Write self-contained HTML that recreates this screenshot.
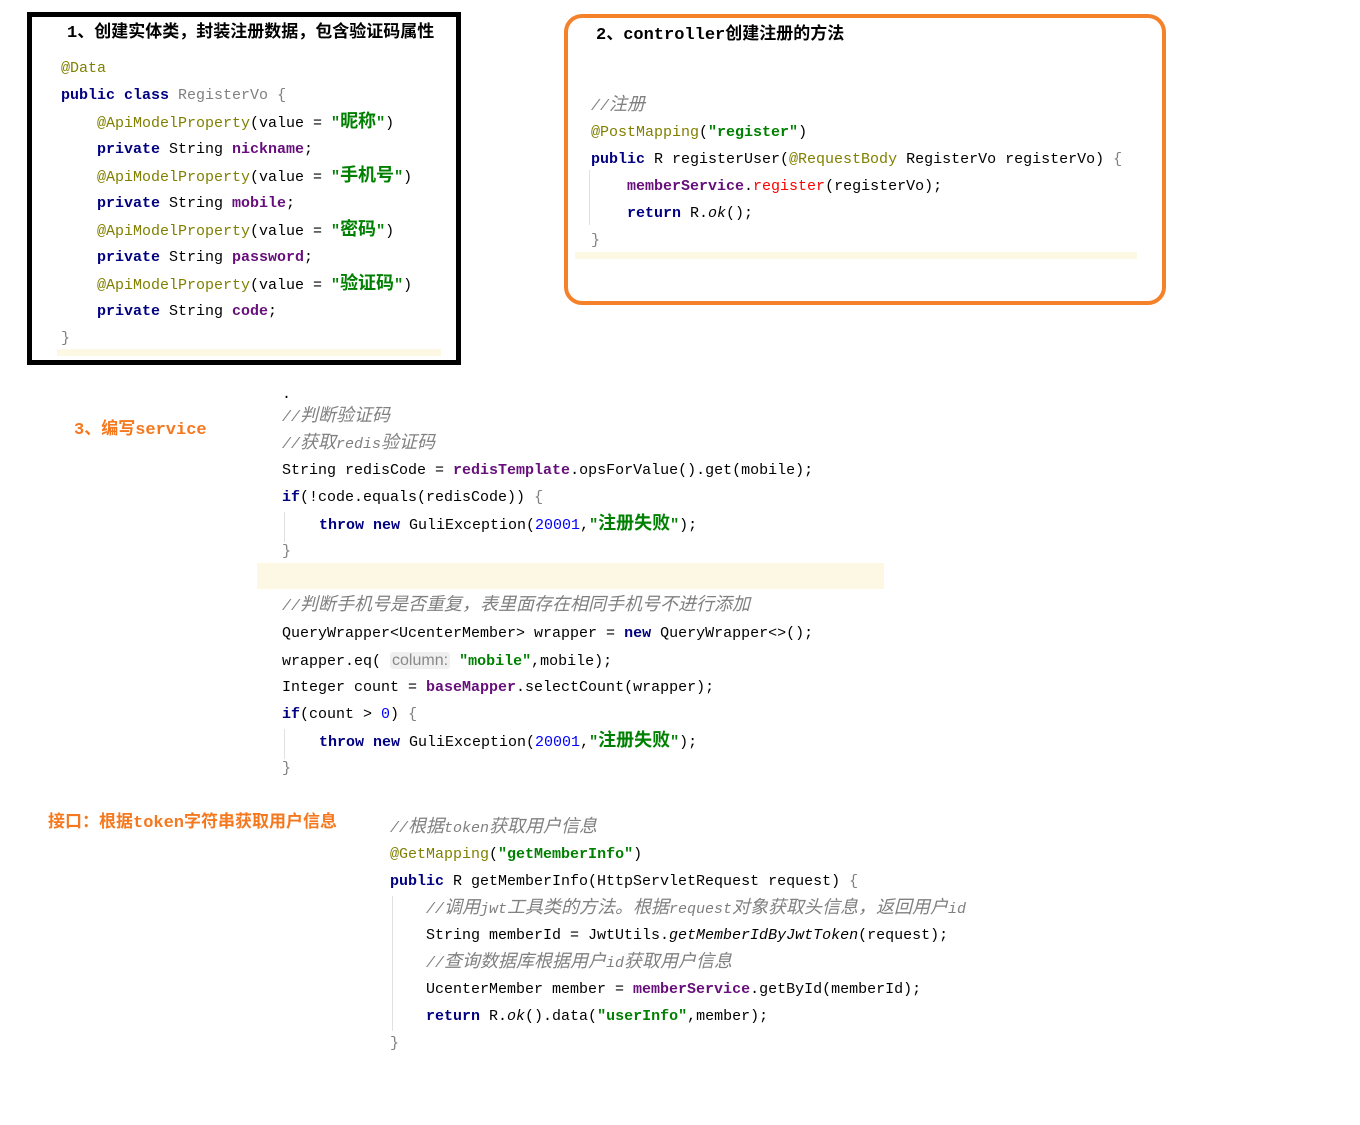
<!DOCTYPE html>
<html><head><meta charset="utf-8"><style>
html,body{margin:0;padding:0;background:#fff;width:1360px;height:1125px;overflow:hidden;position:relative}
.l{position:absolute;white-space:pre;font-family:"Liberation Mono","Noto Sans CJK SC",monospace;font-size:15px;line-height:20px;color:#000}
.k{color:#000080;font-weight:bold}
.a{color:#808000}
.s{color:#008000;font-weight:bold}
.c{color:#808080;font-style:italic}
.f{color:#660e7a;font-weight:bold}
.n{color:#0000ff}
.g{color:#808080}
.r{color:#ff0000}
.i{font-style:italic}
.z{font-size:18px;line-height:20px}
.t{position:absolute;white-space:pre;font-family:"Liberation Mono","Noto Sans CJK SC",monospace;font-size:17px;font-weight:bold;line-height:20px}
.o{color:#f5781e}
.hl{position:absolute;background:#fdf8e4}
.vg{position:absolute;width:1px;background:#e0e0e0}
.hint{background:#f0f0f0;color:#888;font-family:"Liberation Sans",sans-serif;font-style:normal;border-radius:3px;padding:0 2px;font-weight:normal;font-size:16px}
</style></head><body>

<div style="position:absolute;left:27px;top:12px;width:424px;height:343px;border:5px solid #000"></div>
<div class="hl" style="left:57px;top:349px;width:384px;height:7px"></div>
<div class="t" style="left:67px;top:24px">1、创建实体类，封装注册数据，包含验证码属性</div>
<div class="l a" style="left:61px;top:59px">@Data</div>
<div class="l" style="left:61px;top:86px"><span class="k">public class</span> <span class="g">RegisterVo {</span></div>
<div class="l" style="left:97px;top:113px"><span class="a">@ApiModelProperty</span>(value = <span class="s">"<span class="z">昵称</span>"</span>)</div>
<div class="l" style="left:97px;top:140px"><span class="k">private</span> String <span class="f">nickname</span>;</div>
<div class="l" style="left:97px;top:167px"><span class="a">@ApiModelProperty</span>(value = <span class="s">"<span class="z">手机号</span>"</span>)</div>
<div class="l" style="left:97px;top:194px"><span class="k">private</span> String <span class="f">mobile</span>;</div>
<div class="l" style="left:97px;top:221px"><span class="a">@ApiModelProperty</span>(value = <span class="s">"<span class="z">密码</span>"</span>)</div>
<div class="l" style="left:97px;top:248px"><span class="k">private</span> String <span class="f">password</span>;</div>
<div class="l" style="left:97px;top:275px"><span class="a">@ApiModelProperty</span>(value = <span class="s">"<span class="z">验证码</span>"</span>)</div>
<div class="l" style="left:97px;top:302px"><span class="k">private</span> String <span class="f">code</span>;</div>
<div class="l g" style="left:61px;top:329px">}</div>

<div style="position:absolute;left:564px;top:14px;width:594px;height:283px;border:4px solid #f5822a;border-radius:18px"></div>
<div class="hl" style="left:575px;top:252px;width:562px;height:7px"></div>
<div class="vg" style="left:589px;top:170px;height:55px"></div>
<div class="t" style="left:596px;top:26px">2、controller创建注册的方法</div>
<div class="l c" style="left:591px;top:96px">//<span class="z">注册</span></div>
<div class="l" style="left:591px;top:123px"><span class="a">@PostMapping</span>(<span class="s">"register"</span>)</div>
<div class="l" style="left:591px;top:150px"><span class="k">public</span> R registerUser(<span class="a">@RequestBody</span> RegisterVo registerVo) <span class="g">{</span></div>
<div class="l" style="left:627px;top:177px"><span class="f">memberService</span>.<span class="r">register</span>(registerVo);</div>
<div class="l" style="left:627px;top:204px"><span class="k">return</span> R.<span class="i">ok</span>();</div>
<div class="l g" style="left:591px;top:231px">}</div>

<div class="t o" style="left:74px;top:421px">3、编写service</div>
<div class="l" style="left:282px;top:385px">.</div>
<div class="l c" style="left:282px;top:407px">//<span class="z">判断验证码</span></div>
<div class="l c" style="left:282px;top:434px">//<span class="z">获取</span>redis<span class="z">验证码</span></div>
<div class="l" style="left:282px;top:461px">String redisCode = <span class="f">redisTemplate</span>.opsForValue().get(mobile);</div>
<div class="l" style="left:282px;top:488px"><span class="k">if</span>(!code.equals(redisCode)) <span class="g">{</span></div>
<div class="vg" style="left:284px;top:512px;height:30px"></div>
<div class="l" style="left:319px;top:515px"><span class="k">throw new</span> GuliException(<span class="n">20001</span>,<span class="s">"<span class="z">注册失败</span>"</span>);</div>
<div class="l g" style="left:282px;top:542px">}</div>
<div class="hl" style="left:257px;top:563px;width:627px;height:26px"></div>
<div class="l c" style="left:282px;top:596px">//<span class="z">判断手机号是否重复，表里面存在相同手机号不进行添加</span></div>
<div class="l" style="left:282px;top:624px">QueryWrapper&lt;UcenterMember&gt; wrapper = <span class="k">new</span> QueryWrapper&lt;&gt;();</div>
<div class="l" style="left:282px;top:651px">wrapper.eq( <span class="hint">column:</span> <span class="s">"mobile"</span>,mobile);</div>
<div class="l" style="left:282px;top:678px">Integer count = <span class="f">baseMapper</span>.selectCount(wrapper);</div>
<div class="l" style="left:282px;top:705px"><span class="k">if</span>(count &gt; <span class="n">0</span>) <span class="g">{</span></div>
<div class="vg" style="left:284px;top:729px;height:30px"></div>
<div class="l" style="left:319px;top:732px"><span class="k">throw new</span> GuliException(<span class="n">20001</span>,<span class="s">"<span class="z">注册失败</span>"</span>);</div>
<div class="l g" style="left:282px;top:759px">}</div>

<div class="t o" style="left:48px;top:814px">接口：根据token字符串获取用户信息</div>
<div class="l c" style="left:390px;top:818px">//<span class="z">根据</span>token<span class="z">获取用户信息</span></div>
<div class="l" style="left:390px;top:845px"><span class="a">@GetMapping</span>(<span class="s">"getMemberInfo"</span>)</div>
<div class="l" style="left:390px;top:872px"><span class="k">public</span> R getMemberInfo(HttpServletRequest request) <span class="g">{</span></div>
<div class="vg" style="left:392px;top:896px;height:135px"></div>
<div class="l c" style="left:426px;top:899px">//<span class="z">调用</span>jwt<span class="z">工具类的方法。根据</span>request<span class="z">对象获取头信息，返回用户</span>id</div>
<div class="l" style="left:426px;top:926px">String memberId = JwtUtils.<span class="i">getMemberIdByJwtToken</span>(request);</div>
<div class="l c" style="left:426px;top:953px">//<span class="z">查询数据库根据用户</span>id<span class="z">获取用户信息</span></div>
<div class="l" style="left:426px;top:980px">UcenterMember member = <span class="f">memberService</span>.getById(memberId);</div>
<div class="l" style="left:426px;top:1007px"><span class="k">return</span> R.<span class="i">ok</span>().data(<span class="s">"userInfo"</span>,member);</div>
<div class="l g" style="left:390px;top:1034px">}</div>
</body></html>
